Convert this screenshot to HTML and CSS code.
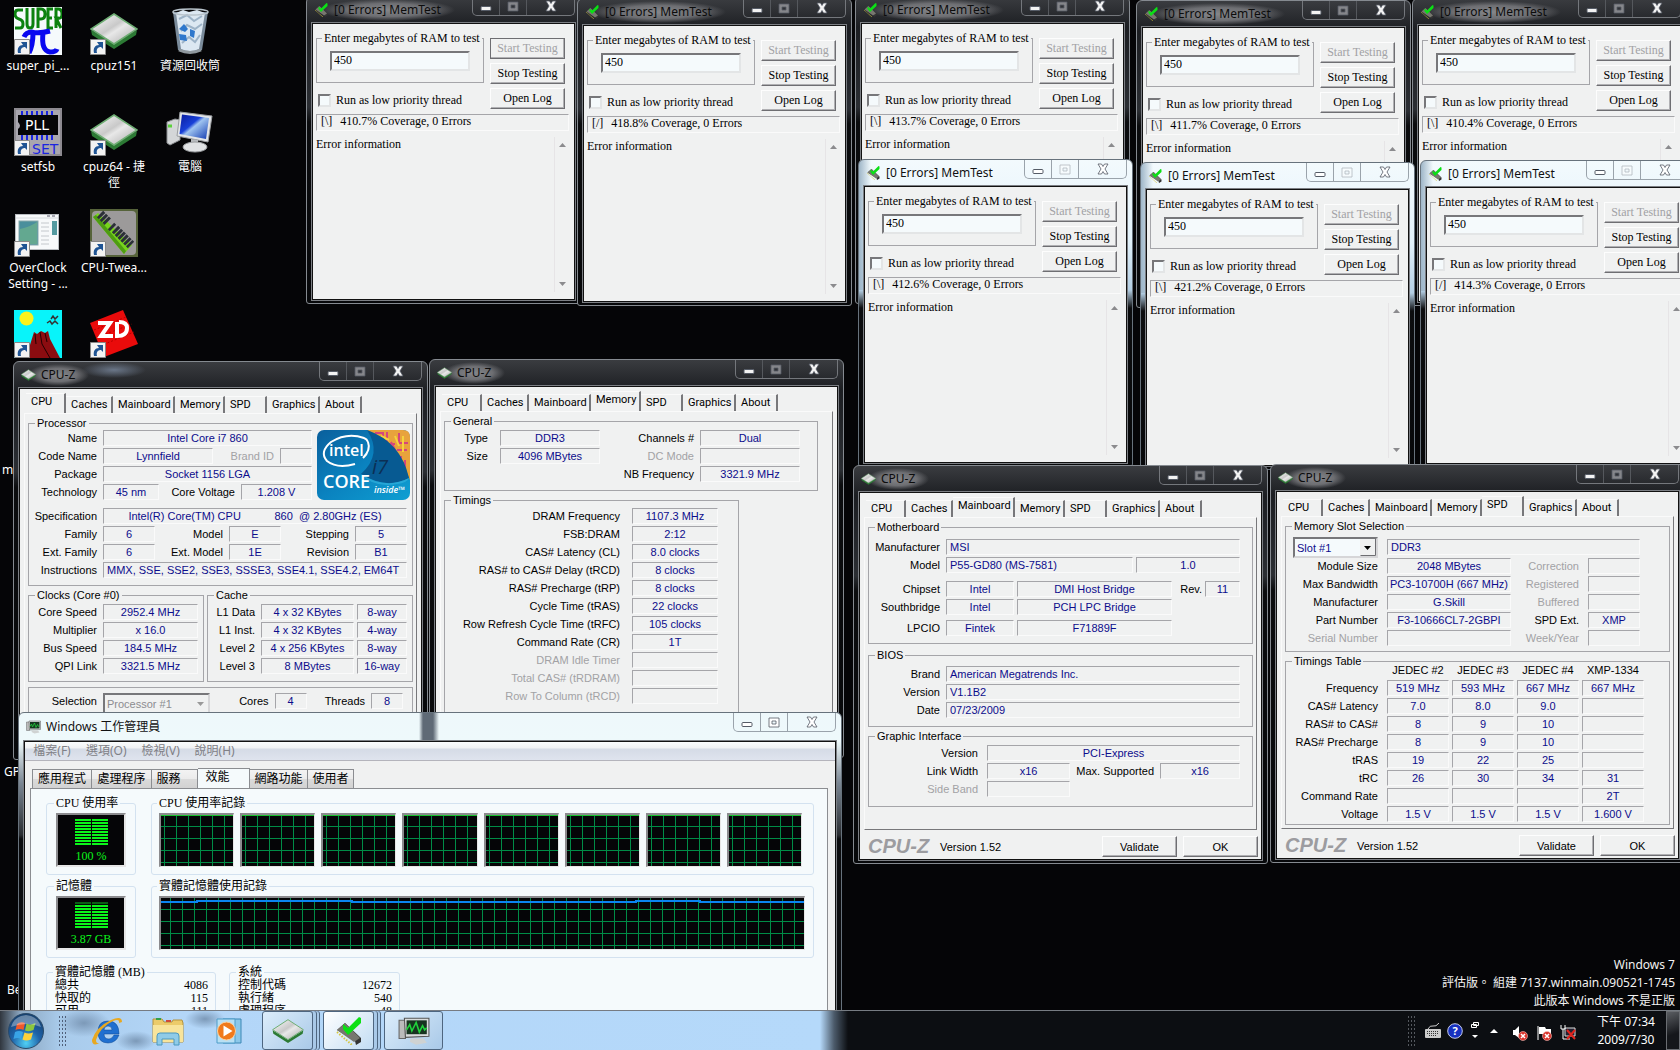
FILE: index.html
```html
<!DOCTYPE html>
<html lang="zh-Hant">
<head>
  <meta charset="UTF-8">
  <meta name="viewport" content="width=device-width, initial-scale=1.0">
  <title>Desktop</title>
  <link rel="stylesheet" href="styles.css">
</head>
<body>
  <!-- Shared icons -->
  <svg width="0" height="0" class="defs" aria-hidden="true">
    <defs>
      <linearGradient id="silver" x1="0" y1="0" x2="1" y2="1">
        <stop offset="0" stop-color="#fff"/><stop offset=".45" stop-color="#c9c9c9"/><stop offset=".55" stop-color="#e8e8e8"/><stop offset="1" stop-color="#a5a5a5"/>
      </linearGradient>
      <radialGradient id="orbFill" cx=".5" cy=".85" r=".9">
        <stop offset="0" stop-color="#4fd0f5"/><stop offset=".45" stop-color="#1f62a8"/><stop offset="1" stop-color="#123a66"/>
      </radialGradient>
      <linearGradient id="intelFill" x1="0" y1="0" x2="1" y2="1">
        <stop offset="0" stop-color="#0a5f9c"/><stop offset=".5" stop-color="#0a82bf"/><stop offset="1" stop-color="#0f9fd2"/>
      </linearGradient>
      <linearGradient id="screenFill" x1="0" y1="0" x2="1" y2="1">
        <stop offset="0" stop-color="#0a1c9c"/><stop offset=".4" stop-color="#1840d8"/><stop offset=".5" stop-color="#9fc4f0"/><stop offset="1" stop-color="#1038b0"/>
      </linearGradient>
    </defs>
    <symbol id="i-min" viewBox="0 0 12 12"><rect x="1" y="6.5" width="10" height="4" rx="1" fill="currentColor" stroke="#555b66" stroke-width="1"/></symbol>
    <symbol id="i-max" viewBox="0 0 12 12"><path d="M1 2h10v9H1zM4 5v3h4V5z" fill="currentColor" fill-rule="evenodd" stroke="#555b66" stroke-width=".8"/></symbol>
    <symbol id="i-close" viewBox="0 0 12 12"><path d="M1 1h3.5L6 3.5 7.5 1H11L8 6l3 5H7.5L6 8.5 4.5 11H1l3-5z" fill="currentColor" stroke="#555b66" stroke-width=".8"/></symbol>
    <symbol id="i-chip" viewBox="0 0 48 36">
      <path d="M1 17 24 31v5L2 22zM47 17 24 31v5l22-14z" fill="#2c7a34"/>
      <path d="M24 1 47 16 24 31 1 16z" fill="url(#silver)" stroke="#6fae74" stroke-width="1.5"/>
    </symbol>
    <symbol id="i-mem" viewBox="0 0 26 28">
      <path d="M1 13 9 6l16 15v4l-5 3-1-4z" fill="#333"/><path d="M1 13 9 6l15 15-6 4z" fill="#77776f"/>
      <path d="M1 15l15 13" stroke="#d5c640" stroke-width="2" stroke-dasharray="1.5 1.5"/>
      <path d="M7 7l5 4L23 0l2 1v5L12 18 7 12z" fill="#0be015"/>
    </symbol>
    <symbol id="i-task" viewBox="0 0 30 26">
      <path d="M1 3h6v17H1z" fill="#bbb" stroke="#666"/><path d="M6 1h23v17l-22 1z" fill="#d9dcdc" stroke="#555"/>
      <path d="M8 3h19v13H8z" fill="#173420"/><path d="M8 12l3-5 2 6 4-8 3 9 3-6 2 4 2-2" fill="none" stroke="#21d43c" stroke-width="1.5"/>
      <path d="M12 20h12l3 4-10 2-6-3z" fill="#cfd2d2"/>
    </symbol>
    <symbol id="i-shortcut" viewBox="0 0 16 16">
      <path d="M.5.5h15v15H.5z" fill="#f3f3f3" stroke="#888"/>
      <path d="M4 14C3 9 5 6 9 6L7 3h6v7l-2-2c-3 0-5 2-4 6z" fill="#1f5494"/>
    </symbol>
    <symbol id="i-error" viewBox="0 0 10 10"><circle cx="5" cy="5" r="4.5" fill="#d9332b" stroke="#f7c5c0" stroke-width=".6"/><path d="M3 3l4 4M7 3L3 7" stroke="#fff" stroke-width="1.5"/></symbol>
  </svg>

  <main class="desktop">
    <div class="icons">
      <a class="icon" href="#">
        <svg viewBox="0 0 48 48"><rect width="48" height="48" fill="#f5fafc"/>
          <path d="M9 3H4q-3 0-3 4t4 5 4 5-3 4H1M13 1v16q0 4 3 4t3-4V1M24 21V2h3q4 0 4 5t-4 5h-3M39 2h-5v19h5M34 11h4M42 21V2h2q4 0 4 5t-4 4h-2l5 10" fill="none" stroke="#0c820f" stroke-width="3"/>
          <path d="M10 30q2-5 8-5 6 2 18-1M19 26q0 12-4 20M29 26q-2 18 7 19 6 0 7-3" fill="none" stroke="#0808f0" stroke-width="5"/>
          <use href="#i-shortcut" y="32" width="16" height="16"/></svg>
        <span>super_pi_...</span>
      </a>
      <a class="icon" href="#">
        <svg viewBox="0 0 48 48"><use href="#i-chip" y="6" width="48" height="36"/><use href="#i-shortcut" y="32" width="16" height="16"/></svg>
        <span>cpuz151</span>
      </a>
      <a class="icon" href="#">
        <svg viewBox="0 0 48 48">
          <path d="M7 5 12 43q12 6 24 0L42 5z" fill="#8fa3b5" opacity=".85"/><path d="M10 6 15 42q9 4 18 0l6-36-8-3-8 2-6-2z" fill="#dce8f2"/>
          <path d="M13 12l8-4 7 6 8-5M15 24l6-6 8 4 7-5M16 36l7-6 6 5 5-7" stroke="#9db3c7" stroke-width="2" fill="none"/>
          <ellipse cx="24.5" cy="5" rx="17.5" ry="3" fill="none" stroke="#b9c4cc" stroke-width="1.5"/>
          <path d="M13 22l5-5 4 5-3 3zM24 22l5 2-1 7-4-2zM13 27l7 1 1 6-7-1z" fill="#2f78cc"/><path d="M13 43q11 5 22 0" stroke="#8f989e" stroke-width="3" fill="none"/>
        </svg>
        <span>資源回收筒</span>
      </a>
      <a class="icon" href="#">
        <svg viewBox="0 0 48 48"><rect x="1" y="1" width="46" height="46" fill="#a9a6ae" stroke="#8d8a90" stroke-width="2"/>
          <path d="M8 3v5M13 3v5M18 3v5M23 3v5M28 3v5M33 3v5M38 3v5M8 26v6M13 26v6M18 26v6M23 26v6M28 26v6M33 26v6M38 26v6" stroke="#1a25e0" stroke-width="2"/>
          <path d="M4 7h40v20H4v-6q4-3 0-7z" fill="#050507"/>
          <text x="11" y="22" class="pix pll">PLL</text><text x="18" y="46" class="pix set">SET</text>
          <use href="#i-shortcut" y="32" width="16" height="16"/></svg>
        <span>setfsb</span>
      </a>
      <a class="icon" href="#">
        <svg viewBox="0 0 48 48"><use href="#i-chip" y="6" width="48" height="36"/><use href="#i-shortcut" y="32" width="16" height="16"/></svg>
        <span>cpuz64 - 捷徑</span>
      </a>
      <a class="icon" href="#">
        <svg viewBox="0 0 48 48">
          <path d="M1 14l8-3 5 1v20L4 37l-3-2z" fill="#d4d6d8" stroke="#8c8f92"/><path d="M2 18h4" stroke="#5bd13b" stroke-width="3"/>
          <path d="M14 4 46 8 42 34 11 28z" fill="#e3e5e8" stroke="#9a9da0"/><path d="M16 6.5 43 10 40 31 13.5 26z" fill="url(#screenFill)"/>
          <path d="M25 31l7 1v5h-7z" fill="#b9bcbf"/><ellipse cx="29" cy="39" rx="12" ry="5" fill="#e0e2e4" stroke="#9a9da0"/>
        </svg>
        <span>電腦</span>
      </a>
      <a class="icon" href="#">
        <svg viewBox="0 0 48 48"><rect x="1.5" y="5.5" width="43" height="35" fill="#f7f9fa" stroke="#b8bcc0"/><path d="M2 9h42" stroke="#d6dadd"/><path d="M33 7h3M38 7h3" stroke="#556" />
          <rect x="5" y="12" width="19" height="24" fill="#4a8f9c" stroke="#8aa"/><path d="M6 35V20q10-2 17-7v22z" fill="#63a890"/>
          <path d="M27 14h8M27 18h8M27 22h8M27 27h8M27 31h8M27 35h8" stroke="#c4c8cc"/><rect x="38" y="12" width="5" height="14" fill="#549aa0"/>
          <use href="#i-shortcut" y="32" width="16" height="16"/></svg>
        <span>OverClock Setting - ...</span>
      </a>
      <a class="icon" href="#">
        <svg viewBox="0 0 48 48"><rect width="48" height="48" fill="#56633a"/><rect x="2" y="2" width="44" height="44" rx="4" fill="#9c9a9a"/>
          <path d="M3 8 8 4 42 36l-8 9z" fill="#77d41c"/><path d="M3 8 34 45l2-3L6 6z" fill="#4e9c12"/>
          <path d="M10 5l8 8M21 17l2 2M25 20l16 16" stroke="#2c3038" stroke-width="9" stroke-dasharray="3 1"/>
          <use href="#i-shortcut" y="32" width="16" height="16"/></svg>
        <span>CPU-Twea...</span>
      </a>
      <span class="icon"></span>
      <a class="icon" href="#" aria-label="volcano">
        <svg viewBox="0 0 48 48"><rect width="48" height="48" fill="#08f4fa"/><circle cx="12.5" cy="8.5" r="7" fill="#fbf31a"/>
          <path d="M12 48 20 22l3 2 4-3 4 2 3-2 2 8 10 19z" fill="#8b0c10"/><path d="M21 24l1 10M26 22l2 12 8 14M31 23l2 9" stroke="#200" fill="none"/>
          <path d="M37 9l2-3 2 3 3-3M33 13l3-2 2 3 3-3 3 3" stroke="#333" fill="none" stroke-width="1.5"/>
          <use href="#i-shortcut" y="32" width="16" height="16"/></svg>
      </a>
      <a class="icon" href="#" aria-label="ZD">
        <svg viewBox="0 0 48 48"><path d="M0 13 33 0 48 34 14 47z" fill="#ea0b0b"/><path d="M4 20 36 7M8 27l34-13M10 36l34-14" stroke="#b80000" stroke-dasharray="2 2"/>
          <path d="M8 13h12L11 26h12M27 12v14q10 0 10-8 0-6-8-6" fill="none" stroke="#fff" stroke-width="4"/>
          <use href="#i-shortcut" y="32" width="16" height="16"/></svg>
      </a>
    </div>
    <span class="peek peek-m">m</span>
    <span class="peek peek-gp">GP</span>
    <span class="peek peek-be">Be</span>

    <div id="memtests"></div>

    <!-- CPU-Z: CPU -->
    <section class="window cpuz cpuz-cpu">
      <header class="titlebar">
        <svg class="app"><use href="#i-chip"/></svg><h2>CPU-Z</h2>
        <div class="controls">
          <button aria-label="Minimize"><svg><use href="#i-min"/></svg></button><button disabled aria-label="Maximize"><svg><use href="#i-max"/></svg></button><button aria-label="Close"><svg><use href="#i-close"/></svg></button>
        </div>
      </header>
      <div class="client">
        <nav class="tabs"><button class="t-cpu active">CPU</button><button class="t-caches">Caches</button><button class="t-board">Mainboard</button><button class="t-mem">Memory</button><button class="t-spd">SPD</button><button class="t-gfx">Graphics</button><button class="t-about">About</button></nav>
        <div class="panel">
          <fieldset class="processor">
            <legend>Processor</legend>
            <div class="with-logo">
              <div class="rows">
                <div class="row"><span class="lbl">Name</span><output class="grow">Intel Core i7 860</output></div>
                <div class="row"><span class="lbl">Code Name</span><output class="w110">Lynnfield</output><span class="mid off">Brand ID</span><output class="w32"></output></div>
                <div class="row"><span class="lbl">Package</span><output class="grow">Socket 1156 LGA</output></div>
                <div class="row"><span class="lbl">Technology</span><output class="w56">45 nm</output><span class="mid">Core Voltage</span><output class="w71">1.208 V</output></div>
              </div>
              <svg class="intel" viewBox="0 0 93 70">
                <rect width="93" height="70" rx="7" fill="url(#intelFill)"/>
                <path d="M50 0h36q7 0 7 7v43Q80 15 50 0z" fill="#e8a33c"/>
                <path d="M58 3h8v5M70 2v12h8M82 3v10h9M80 20h10M84 26v10M88 30v14M74 12l6 12" stroke="#d6467c" stroke-width="2" fill="none"/>
                <path d="M64 6l8 4M86 6v16M78 6l4 10" stroke="#f6d23c" stroke-width="2"/>
                <path d="M50 0Q84 12 92 48 70 60 44 44 66 24 50 0z" fill="#075a92"/><path d="M44 44q24 16 48 4-2 5-12 6-24 4-36-10z" fill="#37b6e0" opacity=".6"/>
                <path d="M47 8Q30 2 14 12 2 22 10 31q10 8 28 3M46 28q8-8 5-16-1-3-4-4" fill="none" stroke="#fff" stroke-width="2"/>
                <text x="12" y="26" class="i-intel">intel</text><text x="6" y="58" class="i-core">CORE</text><text x="55" y="44" class="i-seven">i7</text><text x="57" y="63" class="i-inside">inside™</text>
              </svg>
            </div>
            <div class="row gap6"><span class="lbl">Specification</span><output class="grow pre">Intel(R) Core(TM) CPU           860  @ 2.80GHz (ES)</output></div>
            <div class="row"><span class="lbl">Family</span><output class="w52">6</output><span class="mid">Model</span><output class="w52">E</output><span class="mid">Stepping</span><output class="w52">5</output></div>
            <div class="row"><span class="lbl">Ext. Family</span><output class="w52">6</output><span class="mid">Ext. Model</span><output class="w52">1E</output><span class="mid">Revision</span><output class="w52">B1</output></div>
            <div class="row"><span class="lbl">Instructions</span><output class="grow left">MMX, SSE, SSE2, SSE3, SSSE3, SSE4.1, SSE4.2, EM64T</output></div>
          </fieldset>
          <div class="pair">
            <fieldset class="clocks">
              <legend>Clocks (Core #0)</legend>
              <div class="row"><span class="lbl">Core Speed</span><output class="grow">2952.4 MHz</output></div>
              <div class="row"><span class="lbl">Multiplier</span><output class="grow">x 16.0</output></div>
              <div class="row"><span class="lbl">Bus Speed</span><output class="grow">184.5 MHz</output></div>
              <div class="row"><span class="lbl">QPI Link</span><output class="grow">3321.5 MHz</output></div>
            </fieldset>
            <fieldset class="cache">
              <legend>Cache</legend>
              <div class="row"><span class="lbl">L1 Data</span><output class="grow">4 x 32 KBytes</output><output class="w50">8-way</output></div>
              <div class="row"><span class="lbl">L1 Inst.</span><output class="grow">4 x 32 KBytes</output><output class="w50">4-way</output></div>
              <div class="row"><span class="lbl">Level 2</span><output class="grow">4 x 256 KBytes</output><output class="w50">8-way</output></div>
              <div class="row"><span class="lbl">Level 3</span><output class="grow">8 MBytes</output><output class="w50">16-way</output></div>
            </fieldset>
          </div>
          <fieldset class="selection">
            <div class="row"><label class="lbl" for="processor">Selection</label><select id="processor" disabled><option>Processor #1</option></select><span class="mid">Cores</span><output class="w32">4</output><span class="mid">Threads</span><output class="w32">8</output></div>
          </fieldset>
        </div>
      </div>
    </section>

    <!-- CPU-Z: Memory -->
    <section class="window cpuz cpuz-memory">
      <header class="titlebar">
        <svg class="app"><use href="#i-chip"/></svg><h2>CPU-Z</h2>
        <div class="controls">
          <button aria-label="Minimize"><svg><use href="#i-min"/></svg></button><button disabled aria-label="Maximize"><svg><use href="#i-max"/></svg></button><button aria-label="Close"><svg><use href="#i-close"/></svg></button>
        </div>
      </header>
      <div class="client">
        <nav class="tabs"><button class="t-cpu">CPU</button><button class="t-caches">Caches</button><button class="t-board">Mainboard</button><button class="t-mem active">Memory</button><button class="t-spd">SPD</button><button class="t-gfx">Graphics</button><button class="t-about">About</button></nav>
        <div class="panel">
          <fieldset class="general">
            <legend>General</legend>
            <div class="row"><span class="lbl">Type</span><output class="w100">DDR3</output><span class="mid">Channels #</span><output class="w100">Dual</output></div>
            <div class="row"><span class="lbl">Size</span><output class="w100">4096 MBytes</output><span class="mid off">DC Mode</span><output class="w100"></output></div>
            <div class="row"><span class="mid">NB Frequency</span><output class="w100">3321.9 MHz</output></div>
          </fieldset>
          <fieldset class="timings">
            <legend>Timings</legend>
            <div class="row"><span class="lbl">DRAM Frequency</span><output class="grow">1107.3 MHz</output></div>
            <div class="row"><span class="lbl">FSB:DRAM</span><output class="grow">2:12</output></div>
            <div class="row"><span class="lbl">CAS# Latency (CL)</span><output class="grow">8.0 clocks</output></div>
            <div class="row"><span class="lbl">RAS# to CAS# Delay (tRCD)</span><output class="grow">8 clocks</output></div>
            <div class="row"><span class="lbl">RAS# Precharge (tRP)</span><output class="grow">8 clocks</output></div>
            <div class="row"><span class="lbl">Cycle Time (tRAS)</span><output class="grow">22 clocks</output></div>
            <div class="row"><span class="lbl">Row Refresh Cycle Time (tRFC)</span><output class="grow">105 clocks</output></div>
            <div class="row"><span class="lbl">Command Rate (CR)</span><output class="grow">1T</output></div>
            <div class="row"><span class="lbl off">DRAM Idle Timer</span><output class="grow"></output></div>
            <div class="row"><span class="lbl off">Total CAS# (tRDRAM)</span><output class="grow"></output></div>
            <div class="row"><span class="lbl off">Row To Column (tRCD)</span><output class="grow"></output></div>
          </fieldset>
        </div>
      </div>
    </section>

    <!-- CPU-Z: Mainboard -->
    <section class="window cpuz cpuz-mainboard">
      <header class="titlebar">
        <svg class="app"><use href="#i-chip"/></svg><h2>CPU-Z</h2>
        <div class="controls">
          <button aria-label="Minimize"><svg><use href="#i-min"/></svg></button><button disabled aria-label="Maximize"><svg><use href="#i-max"/></svg></button><button aria-label="Close"><svg><use href="#i-close"/></svg></button>
        </div>
      </header>
      <div class="client">
        <nav class="tabs"><button class="t-cpu">CPU</button><button class="t-caches">Caches</button><button class="t-board active">Mainboard</button><button class="t-mem">Memory</button><button class="t-spd">SPD</button><button class="t-gfx">Graphics</button><button class="t-about">About</button></nav>
        <div class="panel">
          <fieldset class="motherboard">
            <legend>Motherboard</legend>
            <div class="row"><span class="lbl">Manufacturer</span><output class="grow left">MSI</output></div>
            <div class="row"><span class="lbl">Model</span><output class="grow left">P55-GD80 (MS-7581)</output><output class="w104">1.0</output></div>
            <div class="row gap6"><span class="lbl">Chipset</span><output class="w68">Intel</output><output class="w155">DMI Host Bridge</output><span class="mid">Rev.</span><output class="w35">11</output></div>
            <div class="row"><span class="lbl">Southbridge</span><output class="w68">Intel</output><output class="w155">PCH LPC Bridge</output></div>
            <div class="row gap3"><span class="lbl">LPCIO</span><output class="w68">Fintek</output><output class="w155">F71889F</output></div>
          </fieldset>
          <fieldset class="bios">
            <legend>BIOS</legend>
            <div class="row"><span class="lbl">Brand</span><output class="grow left">American Megatrends Inc.</output></div>
            <div class="row"><span class="lbl">Version</span><output class="grow left">V1.1B2</output></div>
            <div class="row"><span class="lbl">Date</span><output class="grow left">07/23/2009</output></div>
          </fieldset>
          <fieldset class="graphic">
            <legend>Graphic Interface</legend>
            <div class="row"><span class="lbl">Version</span><output class="grow">PCI-Express</output></div>
            <div class="row"><span class="lbl">Link Width</span><output class="w83">x16</output><span class="mid">Max. Supported</span><output class="w80">x16</output></div>
            <div class="row"><span class="lbl off">Side Band</span><output class="w83"></output></div>
          </fieldset>
        </div>
        <footer class="bottom"><strong>CPU-Z</strong><span>Version 1.52</span><button class="btn">Validate</button><button class="btn">OK</button></footer>
      </div>
    </section>

    <!-- CPU-Z: SPD -->
    <section class="window cpuz cpuz-spd">
      <header class="titlebar">
        <svg class="app"><use href="#i-chip"/></svg><h2>CPU-Z</h2>
        <div class="controls">
          <button aria-label="Minimize"><svg><use href="#i-min"/></svg></button><button disabled aria-label="Maximize"><svg><use href="#i-max"/></svg></button><button aria-label="Close"><svg><use href="#i-close"/></svg></button>
        </div>
      </header>
      <div class="client">
        <nav class="tabs"><button class="t-cpu">CPU</button><button class="t-caches">Caches</button><button class="t-board">Mainboard</button><button class="t-mem">Memory</button><button class="t-spd active">SPD</button><button class="t-gfx">Graphics</button><button class="t-about">About</button></nav>
        <div class="panel">
          <fieldset class="slot">
            <legend>Memory Slot Selection</legend>
            <div class="row slot-row"><select aria-label="Memory slot"><option>Slot #1</option></select><output class="grow left">DDR3</output></div>
            <div class="row"><span class="lbl">Module Size</span><output class="w124">2048 MBytes</output><span class="mid off">Correction</span><output class="w52"></output></div>
            <div class="row"><span class="lbl">Max Bandwidth</span><output class="w124">PC3-10700H (667 MHz)</output><span class="mid off">Registered</span><output class="w52"></output></div>
            <div class="row"><span class="lbl">Manufacturer</span><output class="w124">G.Skill</output><span class="mid off">Buffered</span><output class="w52"></output></div>
            <div class="row"><span class="lbl">Part Number</span><output class="w124">F3-10666CL7-2GBPI</output><span class="mid">SPD Ext.</span><output class="w52">XMP</output></div>
            <div class="row"><span class="lbl off">Serial Number</span><output class="w124"></output><span class="mid off">Week/Year</span><output class="w52"></output></div>
          </fieldset>
          <fieldset class="spd-timings">
            <legend>Timings Table</legend>
            <table>
              <thead>
                <tr><td></td><th scope="col">JEDEC #2</th><th scope="col">JEDEC #3</th><th scope="col">JEDEC #4</th><th scope="col">XMP-1334</th></tr>
              </thead>
              <tbody>
                <tr><th scope="row">Frequency</th><td>519 MHz</td><td>593 MHz</td><td>667 MHz</td><td>667 MHz</td></tr>
                <tr><th scope="row">CAS# Latency</th><td>7.0</td><td>8.0</td><td>9.0</td><td></td></tr>
                <tr><th scope="row">RAS# to CAS#</th><td>8</td><td>9</td><td>10</td><td></td></tr>
                <tr><th scope="row">RAS# Precharge</th><td>8</td><td>9</td><td>10</td><td></td></tr>
                <tr><th scope="row">tRAS</th><td>19</td><td>22</td><td>25</td><td></td></tr>
                <tr><th scope="row">tRC</th><td>26</td><td>30</td><td>34</td><td>31</td></tr>
                <tr><th scope="row">Command Rate</th><td></td><td></td><td></td><td>2T</td></tr>
                <tr><th scope="row">Voltage</th><td>1.5 V</td><td>1.5 V</td><td>1.5 V</td><td>1.600 V</td></tr>
              </tbody>
            </table>
          </fieldset>
        </div>
        <footer class="bottom"><strong>CPU-Z</strong><span>Version 1.52</span><button class="btn">Validate</button><button class="btn">OK</button></footer>
      </div>
    </section>

    <!-- Task manager -->
    <section class="window light taskmgr">
      <header class="titlebar">
        <svg class="app"><use href="#i-task"/></svg><h2>Windows 工作管理員</h2>
        <div class="controls">
          <button aria-label="Minimize"><svg><use href="#i-min"/></svg></button><button aria-label="Maximize"><svg><use href="#i-max"/></svg></button><button aria-label="Close"><svg><use href="#i-close"/></svg></button>
        </div>
      </header>
      <div class="client">
        <nav class="menu"><button>檔案(F)</button><button>選項(O)</button><button>檢視(V)</button><button>說明(H)</button></nav>
        <nav class="tm-tabs"><button class="w60">應用程式</button><button class="w60">處理程序</button><button class="w46">服務</button><button class="w52 active">效能</button><button class="w58">網路功能</button><button class="w46">使用者</button></nav>
        <div class="tm-panel">
          <div class="tm-row">
            <fieldset class="meter">
              <legend>CPU 使用率</legend>
              <div class="led"><div class="bars"></div>100 %</div>
            </fieldset>
            <fieldset class="history">
              <legend>CPU 使用率記錄</legend>
              <div class="charts"><i class="chart"></i><i class="chart"></i><i class="chart"></i><i class="chart"></i><i class="chart"></i><i class="chart"></i><i class="chart"></i><i class="chart"></i></div>
            </fieldset>
          </div>
          <div class="tm-row">
            <fieldset class="meter">
              <legend>記憶體</legend>
              <div class="led"><div class="bars bars-mem"></div>3.87 GB</div>
            </fieldset>
            <fieldset class="history">
              <legend>實體記憶體使用記錄</legend>
              <div class="chart chart-mem"><svg viewBox="0 0 643 10" preserveAspectRatio="none"><path d="M0 4h36V3h155v1h284V3h64v1h104" fill="none" stroke="#0a84f0" stroke-width="2"/></svg></div>
            </fieldset>
          </div>
          <div class="tm-row stats">
            <fieldset class="stat-mem">
              <legend>實體記憶體 (MB)</legend>
              <p><span>總共</span><b>4086</b></p>
              <p><span>快取的</span><b>115</b></p>
              <p><span>可用</span><b>111</b></p>
            </fieldset>
            <fieldset class="stat-sys">
              <legend>系統</legend>
              <p><span>控制代碼</span><b>12672</b></p>
              <p><span>執行緒</span><b>540</b></p>
              <p><span>處理程序</span><b>48</b></p>
            </fieldset>
          </div>
        </div>
      </div>
    </section>

    <div class="watermark">
      <p>Windows 7</p>
      <p>評估版。 組建 7137.winmain.090521-1745</p>
      <p>此版本 Windows 不是正版</p>
    </div>

    <footer class="taskbar">
      <button class="start" aria-label="Start">
        <svg viewBox="0 0 36 36"><circle cx="18" cy="18" r="17.5" fill="url(#orbFill)" stroke="#2b4a68"/>
          <path d="M9 11q4-3 8-1l-1.500 7q-4-2-8 0z" fill="#f0592a"/><path d="M18.500 10.500q4 2 9-.5l-2 7q-4 2-8.500.5z" fill="#8cc63e"/>
          <path d="M7 19q4-2 8 0l-2 7q-3-2-7.500 0z" fill="#38a3e6"/><path d="M16.500 19.500q4 2 8.500 0l-2 7q-5 2-8.500 0z" fill="#fdd13a"/>
          <path d="M3 14Q6 3 18 2q12 1 15 12-14-6-30 0z" fill="#fff" opacity=".35"/></svg>
      </button>
      <i class="grip"></i>
      <a class="quick" href="#" aria-label="Internet Explorer">
        <svg viewBox="0 0 32 30"><path d="M28 19q-3 8-11 8-10 0-10-11T17 5q11 0 11 13H13q0 5 5 5 3 0 5-4zM13 14h8q0-4-4-4t-4 4z" fill="#1f6fd0" stroke="#0d4690" stroke-width=".5"/>
          <path d="M31 6q0-7-11-2Q5 11 1 24q0 7 8 3-4 1-4-3Q9 11 22 5q7-3 6 2z" fill="#e8a820"/></svg>
      </a>
      <a class="quick" href="#" aria-label="Explorer">
        <svg viewBox="0 0 32 30"><path d="M1 3h9l2 3h8l1-2h9l1 3v19H1z" fill="#eccb6a" stroke="#b5933c"/><path d="M1 9h30v17H1z" fill="#f8e49b"/><path d="M4 2h5v2H4z" fill="#33a04a"/><path d="M14 4h5v2h-5z" fill="#cf4a3a"/>
          <path d="M5 29V20q0-3 3-3h16q3 0 3 3v9h-5v-6H10v6z" fill="#8fcbe8" stroke="#4a98c0"/></svg>
      </a>
      <a class="quick" href="#" aria-label="Media Player">
        <svg viewBox="0 0 32 30"><path d="M10 3h18v24H10z" fill="#8cc8ea" stroke="#3d88b5"/><path d="M4 3h18v24H4z" fill="#b8e0f4" stroke="#4d9cc8"/><circle cx="13.5" cy="15" r="9" fill="#f07a1c" stroke="#fbd0a0"/><path d="M10.5 9.500v11l9-5.500z" fill="#fff"/></svg>
      </a>
      <button class="task stacked" aria-label="CPU-Z"><svg><use href="#i-chip"/></svg></button>
      <button class="task stacked on" aria-label="MemTest"><svg><use href="#i-mem"/></svg></button>
      <button class="task" aria-label="Windows 工作管理員"><svg><use href="#i-task"/></svg></button>

      <div class="tray">
        <i class="grip dim"></i>
        <svg class="kbd" viewBox="0 0 16 16"><path d="M3 6q2-4 5-3t6-3" stroke="#ccc" fill="none"/><rect y="6" width="16" height="9" rx="1" fill="#ccc"/><path d="M2 8.500h12M2 10.500h12M4 12.500h8" stroke="#333" stroke-dasharray="1 1"/></svg>
        <svg class="help" viewBox="0 0 16 16"><circle cx="8" cy="8" r="7.3" fill="#1731c0" stroke="#c5cbe8"/><text x="8" y="12">?</text></svg>
        <svg class="lang" viewBox="0 0 8 20"><path d="M2.500 1.500h5v3h-5zM.5 3.500h5v3h-5z" fill="#111" stroke="#fff"/><path d="M1 14h6l-3 3z" fill="#fff"/></svg>
        <svg class="up" viewBox="0 0 8 4"><path d="M0 4h8L4 0z" fill="#fff"/></svg>
        <svg class="state" viewBox="0 0 16 16"><path d="M1 5h2l4-4v12L3 10H1z" fill="#fff"/><use href="#i-error" x="6" y="6" width="10" height="10"/></svg>
        <svg class="state" viewBox="0 0 16 16"><path d="M2 1v14" stroke="#fff"/><path d="M3 2h6l1 2h5v7H9L8 9H3z" fill="#fff"/><use href="#i-error" x="6" y="6" width="10" height="10"/></svg>
        <svg class="state" viewBox="0 0 16 16"><path d="M5 3h10v8H5z" fill="#223" stroke="#ddd"/><path d="M1 0v4h4V0M3 4v10h7" stroke="#fff" fill="none"/><path d="M7 5l8 9M15 5l-8 9" stroke="#e0231c" stroke-width="2"/></svg>
        <time class="clock">下午 07:34<br>2009/7/30</time>
        <button class="show-desktop" aria-label="Show desktop"></button>
      </div>
    </footer>
  </main>

  <script src="script.js"></script>
</body>
</html>
```
FILE: styles.css
```css
* {
  box-sizing: border-box;
}

body {
  margin: 0;
  font-family: "Noto Sans", "Noto Sans CJK TC", sans-serif;
  font-size: 12px;
  background: #050507;
}

button, input, select {
  margin: 0;
  font: inherit;
  color: inherit;
}

fieldset {
  margin: 0;
  padding: 0;
  min-width: 0;
  border: 1px solid #a5a5a9;
}

legend {
  white-space: nowrap;
}

h2, p {
  margin: 0;
}

.defs {
  position: absolute;
}

.desktop {
  position: relative;
  height: 100vh;
  overflow: hidden;
}

/* Desktop icons */
.icons {
  display: grid;
  grid-template-columns: repeat(3, 76px);
  grid-auto-rows: 101px;
}

.icon {
  display: flex;
  flex-direction: column;
  align-items: center;
  padding-top: 7px;
  color: #fff;
  line-height: 16px;
  text-align: center;
  text-decoration: none;
}

.icon svg {
  width: 48px;
  height: 48px;
  flex: none;
}

.icon span {
  width: 70px;
  margin-top: 3px;
}

.pix {
  font-family: "DejaVu Sans", sans-serif;
  font-size: 14px;
}

.pll { fill: #fff; }
.set { fill: #1a25e0; }

.peek {
  position: absolute;
  color: #fff;
}

.peek-m { left: 2px; top: 461px; }
.peek-gp { left: 4px; top: 763px; }
.peek-be { left: 7px; top: 981px; }

/* Windows */
.window {
  position: absolute;
  padding: 0 5px 4px;
  border: 1px solid #858a90;
  border-radius: 6px 6px 3px 3px;
  background: linear-gradient(#3a3c40, #1c1e22 30px, #2b2e33 110px, #0b0c0e 125px, #07080a);
}

.titlebar {
  display: flex;
  align-items: center;
  justify-content: flex-start;
  height: 26px;
  padding-left: 2px;
}

.app {
  width: 15px;
  height: 14px;
  flex: none;
}

.titlebar h2 {
  margin: 0 auto 0 -9px;
  padding: 0 14px;
  font-size: 12px;
  font-weight: normal;
  color: #0c0c0c;
  line-height: 22px;
  background: radial-gradient(closest-side, #85868a, #6d6e72 60%, transparent);
}

.app {
  position: relative;
}

.controls {
  display: flex;
  align-self: flex-start;
  height: 19px;
  border: 1px solid #74777c;
  border-top: 0;
  border-radius: 0 0 5px 5px;
}

.controls button {
  display: flex;
  align-items: center;
  justify-content: center;
  width: 27px;
  padding: 0;
  border: 0;
  border-right: 1px solid #55585d;
  background: none;
  color: #f3f3f3;
}

.controls button:last-child {
  width: 47px;
  border-right: 0;
}

.controls button:disabled {
  color: #85868a;
}

.controls svg {
  width: 12px;
  height: 12px;
}

.client {
  display: flex;
  flex-direction: column;
  border: 1px solid #111;
  outline: 1px solid #7c7f84;
  outline-offset: 0;
  background: #f0f1f1;
  color: #000;
}

.light {
  border-color: #67727c;
  background: linear-gradient(90deg, #9fb6c8, transparent 12px) no-repeat 0 0 / 100% 130px, linear-gradient(#f3fafd, #e2f2fb 80px, #b4cfe4 130px, #0c0d0f 148px, #07080a);
}

.light .titlebar h2 {
  color: #111;
  background: none;
}

.light .controls {
  border-color: #9aa3ab;
}

.light .controls button {
  color: #fff;
  border-color: #9aa3ab;
}

.light .controls button:disabled svg {
  opacity: .4;
}

/* MemTest */
.memtest {
  width: 275px;
  height: 308px;
  font-family: "Liberation Serif", serif;
}

.memtest h2 {
  font-family: "Noto Sans", sans-serif;
}

.memtest .client {
  height: 277px;
  padding: 7px 5px 7px 3px;
}

.mt-top {
  display: flex;
  justify-content: space-between;
  height: 79px;
}

.mt-left {
  width: 168px;
}

.memtest fieldset {
  height: 52px;
  padding: 6px 0 0 13px;
}

.memtest legend {
  margin-left: -8px;
  padding: 0 2px;
  line-height: 14px;
}

.memtest input[type="text"] {
  display: block;
  width: 140px;
  height: 20px;
  padding: 0 2px 2px;
  border: 2px solid;
  border-color: #77777a #e3e5e6 #e3e5e6 #77777a;
  background: #f5fafc;
}

.low {
  display: flex;
  align-items: center;
  gap: 5px;
  height: 14px;
  margin: 10px 0 0 2px;
}

.low input {
  appearance: none;
  width: 13px;
  height: 13px;
  border: 2px solid;
  border-color: #77777a #e3e5e6 #e3e5e6 #77777a;
  background: #f5fafc;
}

.mt-buttons {
  display: flex;
  flex-direction: column;
  gap: 4px;
  padding: 7px 4px 0 0;
}

.btn {
  width: 75px;
  height: 21px;
  padding: 0;
  border: 1px solid;
  border-color: #fdfdfd #6e6e72 #6e6e72 #fdfdfd;
  background: #f0f1f1;
  box-shadow: inset -1px -1px #b0b0b3;
}

.btn:disabled {
  color: #a2a2a5;
}

.btn.default {
  border-color: #6e6e72;
}

.status {
  display: flex;
  gap: 8px;
  height: 17px;
  margin-top: 4px;
  padding-left: 4px;
  border: 1px solid;
  border-color: #a5a5a9 #fafafa #fafafa #a5a5a9;
  line-height: 13px;
}

.info {
  display: flex;
  flex: 1;
  justify-content: space-between;
  margin-top: 6px;
  line-height: 14px;
}

.scroll {
  display: flex;
  flex-direction: column;
  justify-content: space-between;
  align-items: center;
  width: 15px;
  padding: 6px 0;
  border-left: 1px solid #e6e4e6;
}

.scroll svg {
  width: 7px;
  height: 4px;
}

/* CPU-Z */
.cpuz {
  width: 415px;
  height: 399px;
  font-family: "Liberation Sans", Arial, sans-serif;
  font-size: 11px;
}

.cpuz h2 {
  font-family: "Noto Sans", sans-serif;
}

.cpuz-cpu {
  left: 13px;
  top: 361px;
  background: radial-gradient(ellipse 32px 8px at 100px 8px, #6a7688, transparent), linear-gradient(#3a3c40, #1c1e22 30px, #2b2e33 110px, #0b0c0e 125px, #07080a);
}

.cpuz-memory { left: 429px; top: 359px; }
.cpuz-mainboard { left: 853px; top: 465px; }
.cpuz-spd { left: 1270px; top: 464px; }

.cpuz .client {
  height: 368px;
}

.tabs {
  display: flex;
  align-items: flex-end;
  height: 24px;
  padding-left: 6px;
}

.tabs button {
  height: 17px;
  padding: 0 0 0 5px;
  border: 0;
  border-top: 1px solid #fafafa;
  border-right: 2px solid #77777a;
  background: #f0f1f1;
  font-family: Roboto, sans-serif;
  line-height: 14px;
  text-align: left;
}

.tabs .active {
  height: 20px;
  padding-bottom: 4px;
}

.t-cpu { width: 40px; }
.t-caches { width: 47px; }
.t-board { width: 62px; }
.t-mem { width: 50px; }
.t-spd { width: 42px; }
.t-gfx { width: 53px; }
.t-about { width: 42px; }

.panel {
  height: 313px;
  margin: 0 4px;
  padding: 2px 3px;
  border: 1px solid;
  border-color: #fafafa #77777a #77777a #fafafa;
}

.panel legend {
  margin-left: 6px;
  padding: 0 2px;
  line-height: 14px;
}

.row {
  display: flex;
  height: 16px;
  margin-bottom: 2px;
  line-height: 16px;
  white-space: nowrap;
}

.rows { flex: 1; }
.gap3 { margin-top: 5px; }
.gap6 { margin-top: 8px; }

.lbl {
  flex: none;
  padding-right: 6px;
  text-align: right;
}

.mid {
  flex: 1;
  padding-right: 6px;
  text-align: right;
}

.off {
  color: #a2a2a5;
}

output, .spd-timings tbody td {
  height: 16px;
  border: 1px solid;
  border-color: #a5a5a9 #fafafa #fafafa #a5a5a9;
  color: #0c0c8c;
  line-height: 14px;
  text-align: center;
}

output + output {
  margin-left: 3px;
}

.grow { flex: 1; }
.pre { white-space: pre; }

.left {
  padding-left: 3px;
  text-align: left;
}

.w32 { width: 32px; }
.w35 { width: 35px; }
.w46 { width: 46px; }
.w50 { width: 50px; }
.w52 { width: 52px; }
.w56 { width: 56px; }
.w58 { width: 58px; }
.w60 { width: 60px; }
.w68 { width: 68px; }
.w71 { width: 71px; }
.w80 { width: 80px; }
.w83 { width: 83px; }
.w100 { width: 100px; }
.w104 { width: 104px; }
.w110 { width: 110px; }
.w124 { width: 124px; }
.w155 { width: 155px; }

.processor { padding: 0 5px 5px 0; }
.processor .lbl, .clocks .lbl, .selection .lbl { width: 74px; }

.with-logo {
  display: flex;
  gap: 5px;
  margin: 0 -3px -2px 0;
}

.intel {
  width: 93px;
  height: 70px;
}

.intel text {
  fill: #fff;
  font-family: "Open Sans", sans-serif;
}

.intel .i-intel { font-size: 16px; font-weight: 600; }
.intel .i-core { font-size: 18px; font-weight: 600; }
.intel .i-seven { font-size: 20px; font-style: italic; fill: #0b2f55; }
.intel .i-inside { font-size: 9px; font-style: italic; font-weight: 600; }

.pair {
  display: flex;
  gap: 3px;
  margin-top: 2px;
}

.clocks { width: 176px; padding: 2px 5px 5px 0; }
.cache { flex: 1; padding: 2px 5px 5px 0; }
.cache .lbl { width: 53px; }

.selection {
  height: 34px;
  margin-top: 5px;
  padding: 5px 9px 0 0;
}

select {
  height: 21px;
  padding: 0 2px;
  border: 2px solid;
  border-color: #77777a #d6d6d8 #d6d6d8 #77777a;
  border-radius: 0;
  appearance: none;
  color: #0c0c8c;
}

.selection select {
  width: 107px;
  background: #f0f1f1 url("data:image/svg+xml,%3Csvg xmlns='http://www.w3.org/2000/svg' width='15' height='17'%3E%3Cpath d='M4 7h7l-3.5 4z' fill='%23999'/%3E%3C/svg%3E") no-repeat right center;
  color: #8c8c90;
  opacity: 1;
}

.slot select {
  width: 85px;
  margin: -2px 9px 0 7px;
  background: #f5fafc url("data:image/svg+xml,%3Csvg xmlns='http://www.w3.org/2000/svg' width='16' height='17'%3E%3Cpath d='M0 0h16v17H0z' fill='%23f0f1f1'/%3E%3Cpath d='M.5 16.5h15V0' fill='none' stroke='%236e6e72'/%3E%3Cpath d='M4 7h7l-3.5 4z'/%3E%3C/svg%3E") no-repeat right center;
}

.general { width: 374px; padding: 2px 17px 6px 0; }
.general .lbl { width: 55px; padding-right: 12px; }
.timings { width: 295px; margin-top: 2px; padding: 1px 20px 6px 0; }
.timings .lbl { width: 187px; padding-right: 12px; }

.motherboard { padding: 5px 12px 5px 0; }
.motherboard .lbl, .bios .lbl { width: 77px; }
.motherboard .mid { padding-right: 3px; }
.bios { margin-top: 4px; padding: 4px 12px 6px 0; }
.graphic { margin-top: 2px; padding: 2px 12px 7px 0; }
.graphic .lbl { width: 118px; padding-right: 9px; }

.slot { padding: 6px 29px 3px 0; }
.slot-row { margin-bottom: 3px; }
.slot .lbl { width: 101px; padding-right: 9px; }
.slot .mid { padding-right: 9px; }
.spd-timings { margin-top: 2px; }

.spd-timings table {
  margin-top: -7px;
  border-spacing: 3px 2px;
  line-height: 14px;
}

.spd-timings th {
  width: 62px;
  padding: 0;
  font-weight: normal;
  white-space: nowrap;
}

.spd-timings thead th {
  padding-bottom: 1px;
}

.spd-timings tbody th, .spd-timings thead td {
  width: 95px;
  padding: 0 6px 0 0;
  text-align: right;
}

.spd-timings tbody td {
  width: 62px;
  padding: 0;
}

.bottom {
  display: flex;
  align-items: center;
  gap: 6px;
  padding: 6px 3px 0 8px;
}

.bottom strong {
  width: 66px;
  color: #9c9ca0;
  font-size: 20px;
  font-style: italic;
  line-height: 21px;
}

.bottom span {
  flex: 1;
}

/* Task manager */
.taskmgr {
  left: 18px;
  top: 712px;
  width: 824px;
  height: 340px;
  background: linear-gradient(90deg, transparent 400px, #5f6a76 404px, #5f6a76 414px, transparent 420px) no-repeat 0 0 / 100% 28px, linear-gradient(#eef8fb, #eef9fb 28px, #7b8794 70px, #2a2d31 122px, #0b0c0e 126px);
}

.taskmgr .titlebar {
  height: 28px;
}

.taskmgr h2, .taskmgr .menu {
  font-family: "Noto Sans", "Noto Sans CJK TC", sans-serif;
}

.taskmgr .client {
  height: 310px;
  font-family: "Liberation Serif", "Noto Sans CJK TC", serif;
}

.menu {
  display: flex;
  height: 19px;
  border-bottom: 1px solid #b4b4bc;
  background: linear-gradient(#fafcfd, #f0f1f3 6px, #d5dbe6 7px, #dfe4ee);
}

.menu button {
  min-width: 54px;
  padding: 0 7px;
  border: 0;
  background: none;
  color: #808086;
  line-height: 16px;
  white-space: nowrap;
}

.tm-tabs {
  display: flex;
  align-items: flex-end;
  height: 27px;
  padding-left: 7px;
}

.tm-tabs button {
  height: 19px;
  padding: 0;
  border: 1px solid #8b8d91;
  border-bottom: 0;
  border-left-width: 0;
  background: linear-gradient(#f3f3f3, #ebebeb 50%, #dadada 52%, #d2d2d2);
  line-height: 16px;
  white-space: nowrap;
}

.tm-tabs button:first-child {
  border-left-width: 1px;
}

.tm-tabs .active {
  height: 21px;
  margin-bottom: -1px;
  padding-bottom: 4px;
  background: #f5fafc;
}

.tm-tabs .w46:nth-child(3), .tm-tabs .active {
  padding-right: 12px;
}

.tm-panel {
  flex: 1;
  margin: 0 7px 0 5px;
  padding: 7px 13px 0 15px;
  border: 1px solid #8b8d91;
  background: #f5fafc;
}

.tm-row {
  display: flex;
  gap: 15px;
  margin-bottom: 4px;
}

.tm-row fieldset {
  border-color: #d3e2f0;
  border-radius: 3px;
}

.tm-row legend {
  margin-left: -2px;
  padding: 0 2px;
  line-height: 14px;
}

.meter {
  width: 90px;
  height: 79px;
  padding: 3px 9px 0;
}

.history {
  flex: 1;
  padding: 3px 8px 0 7px;
}

.led {
  width: 70px;
  height: 54px;
  padding-top: 4px;
  border: 2px solid;
  border-color: #8b8b8e #e6e6e6 #e6e6e6 #8b8b8e;
  background: #050507;
  color: #0bf51a;
  line-height: 14px;
  text-align: center;
}

.bars {
  width: 33px;
  height: 27px;
  margin: 0 auto 3px;
  background: linear-gradient(90deg, transparent 16px, #050507 16px, #050507 17px, transparent 17px), repeating-linear-gradient(#0bf51a 0 2px, #050507 2px 3px);
}

.bars-mem {
  background: linear-gradient(90deg, transparent 16px, #050507 16px, #050507 17px, transparent 17px), linear-gradient(#0a5f14 2px, transparent 2px), repeating-linear-gradient(#0bf51a 0 2px, #050507 2px 3px);
}

.charts {
  display: flex;
  gap: 6px;
}

.chart {
  flex: 1;
  height: 54px;
  border: 2px solid;
  border-color: #8b8b8e #e6e6e6 #e6e6e6 #8b8b8e;
  border-right-width: 1px;
  border-bottom-width: 1px;
  background:
    linear-gradient(#19c22c, #19c22c) no-repeat 0 0 / 100% 1px,
    linear-gradient(90deg, #008c46 1px, transparent 1px) 3px 0 / 12px 12px,
    linear-gradient(#008c46 1px, transparent 1px) 0 11px / 12px 12px,
    #050507;
}

.charts .chart:last-child {
  margin-right: 3px;
}

.chart-mem {
  background:
    linear-gradient(90deg, #008c46 1px, transparent 1px) 9px 0 / 12px 12px,
    linear-gradient(#008c46 1px, transparent 1px) 0 11px / 12px 12px,
    #050507;
}

.chart-mem svg {
  display: block;
  width: 100%;
  height: 10px;
}

.stats {
  gap: 13px;
  margin-top: 7px;
}

.stats legend {
  margin-left: 6px;
}

.stats p {
  display: flex;
  justify-content: space-between;
  padding: 0 7px 0 8px;
  line-height: 13px;
}

.stats b {
  font-weight: normal;
}

.stat-mem { width: 170px; }
.stat-sys { width: 171px; }

/* Watermark and taskbar */
.watermark {
  position: absolute;
  right: 5px;
  bottom: 40px;
  color: #f2f2f2;
  line-height: 18px;
  text-align: right;
}

.taskbar {
  position: absolute;
  left: 0;
  right: 0;
  bottom: 0;
  display: flex;
  align-items: center;
  height: 40px;
  border-top: 1px solid #767b82;
  background:
    radial-gradient(ellipse 26px 14px at 84px 12px, #7c99b8, transparent),
    radial-gradient(ellipse 20px 10px at 136px 30px, #7c99b8, transparent),
    radial-gradient(ellipse 20px 10px at 205px 8px, #7c99b8, transparent),
    linear-gradient(90deg, #30363e 0, #8ba6c0 20px, #a9cbeb 60px, #b3d6f8 180px, #b5d9fa 820px, #4c5b6b 834px, #0c0e12 848px);
}

.start {
  width: 52px;
  height: 38px;
  padding: 0 0 0 8px;
  border: 0;
  background: none;
}

.start svg {
  display: block;
  width: 36px;
  height: 36px;
}

.grip {
  width: 9px;
  height: 32px;
  margin: 0 9px 0 6px;
  background: radial-gradient(circle, #50607a 1px, transparent 1px) 0 0 / 3px 4px;
}

.quick {
  display: flex;
  justify-content: center;
  width: 61px;
}

.quick svg {
  width: 32px;
  height: 30px;
}

.task {
  width: 51px;
  height: 39px;
  margin-left: 3px;
  padding: 0;
  border: 1px solid #4e6680;
  border-radius: 3px;
  background: linear-gradient(135deg, #dcedfb, #a9c9e8);
}

.task svg {
  display: block;
  width: 32px;
  height: 28px;
  margin: 0 auto;
}

.task:last-of-type {
  width: 59px;
}

.stacked {
  margin-right: 7px;
  box-shadow: 3px 0 #a9c9e8, 4px 0 #4e6680, 6px 0 #a9c9e8, 7px 0 #4e6680;
}

.on {
  background: linear-gradient(135deg, #fff, #c2dcf3);
}

.tray {
  display: flex;
  align-items: center;
  height: 100%;
  margin-left: auto;
  color: #fff;
}

.dim {
  margin: 0 9px 0 0;
  background: radial-gradient(circle, #54585e 1px, transparent 1px) 0 0 / 3px 4px;
}

.kbd, .help, .state {
  width: 16px;
  height: 16px;
}

.kbd { margin-right: 6px; }
.help { margin-right: 8px; }

.help text {
  fill: #fff;
  font-size: 11px;
  font-weight: bold;
  text-anchor: middle;
}

.lang {
  width: 8px;
  height: 20px;
  margin-right: 11px;
}

.up {
  width: 8px;
  height: 4px;
  margin-right: 14px;
}

.state {
  margin: 4px 8px 0 0;
}

.clock {
  width: 72px;
  margin: 0 4px 0 6px;
  line-height: 18px;
  text-align: center;
}

.show-desktop {
  width: 14px;
  height: 100%;
  padding: 0;
  border: 1px solid #6a6d72;
  background: linear-gradient(160deg, #5a5d62, #15171b 60%);
}
```
FILE: script.js
```js
// MemTest windows, in stacking order
const memtests = [
  { x: 306, y: -4, spin: "[\\]", coverage: "410.7%", focused: true },
  { x: 577, y: -2, spin: "[/]", coverage: "418.8%" },
  { x: 855, y: -4, spin: "[\\]", coverage: "413.7%" },
  { x: 1136, y: 0, spin: "[\\]", coverage: "411.7%" },
  { x: 1412, y: -2, spin: "[\\]", coverage: "410.4%" },
  { x: 858, y: 159, spin: "[\\]", coverage: "412.6%", light: true },
  { x: 1140, y: 162, spin: "[\\]", coverage: "421.2%", light: true },
  { x: 1420, y: 160, spin: "[/]", coverage: "414.3%", light: true },
];

document.getElementById("memtests").innerHTML = memtests
  .map(
    (m, i) => `
    <section class="window memtest ${m.light ? "light" : ""}" style="left:${m.x}px;top:${m.y}px">
      <header class="titlebar">
        <svg class="app"><use href="#i-mem"/></svg><h2>[0 Errors] MemTest</h2>
        <div class="controls">
          <button aria-label="Minimize"><svg><use href="#i-min"/></svg></button><button disabled aria-label="Maximize"><svg><use href="#i-max"/></svg></button><button aria-label="Close"><svg><use href="#i-close"/></svg></button>
        </div>
      </header>
      <div class="client">
        <div class="mt-top">
          <div class="mt-left">
            <fieldset>
              <legend><label for="ram${i}">Enter megabytes of RAM to test</label></legend>
              <input type="text" id="ram${i}" value="450">
            </fieldset>
            <label class="low"><input type="checkbox">Run as low priority thread</label>
          </div>
          <div class="mt-buttons">
            <button class="btn ${m.focused ? "default" : ""}" disabled>Start Testing</button>
            <button class="btn">Stop Testing</button>
            <button class="btn">Open Log</button>
          </div>
        </div>
        <div class="status"><span>${m.spin}</span><span>${m.coverage} Coverage, 0 Errors</span></div>
        <div class="info">
          <span>Error information</span>
          <div class="scroll">
            <svg viewBox="0 0 7 4"><path d="M0 4h7L3.5 0z" fill="#8b8b8e"/></svg>
            <svg viewBox="0 0 7 4"><path d="M0 0h7L3.5 4z" fill="#8b8b8e"/></svg>
          </div>
        </div>
      </div>
    </section>
  `
  )
  .join("");
```
